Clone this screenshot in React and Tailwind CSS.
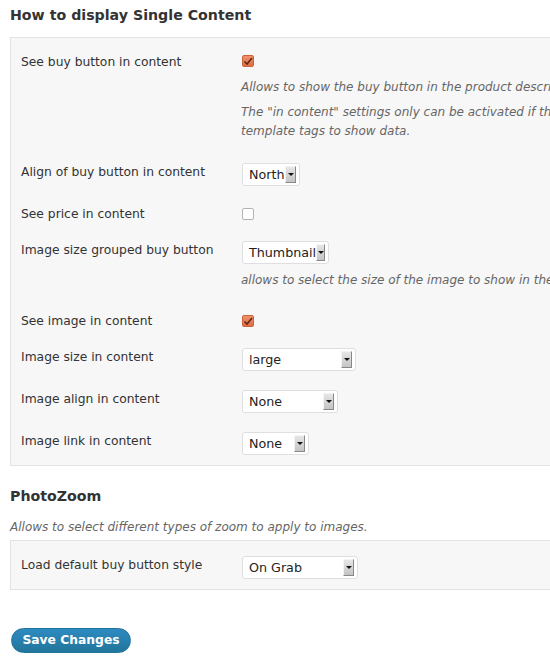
import React from 'react';

const font = { fontFamily: '"DejaVu Sans", Verdana, sans-serif' };

function Arrow() {
  return (
    <span className="ml-auto mr-[3px] flex h-[17px] w-[11px] items-center justify-center border-r border-b border-r-[#888] border-b-[#888] border-t border-l border-t-[#f4f4f4] border-l-[#f4f4f4] bg-gradient-to-b from-[#e6e6e6] to-[#c4c4c4]">
      <span className="h-0 w-0 border-x-[3px] border-t-[3px] border-x-transparent border-t-[#111]" />
    </span>
  );
}

function Select({ value, width }) {
  return (
    <div
      className="flex h-[23px] items-center rounded-[3px] border border-[#dfdfdf] bg-white pl-[6px] text-[12.7px] text-[#222]"
      style={{ width }}
    >
      <span>{value}</span>
      <Arrow />
    </div>
  );
}

function Checkbox({ checked }) {
  if (!checked) {
    return <span className="block h-[12px] w-[12px] rounded-[2px] border border-[#b4b4b4] bg-white" />;
  }
  return (
    <span className="flex h-[12px] w-[12px] items-center justify-center rounded-[2px] border border-[#c9633d] bg-gradient-to-b from-[#f0906a] to-[#e06c43]">
      <svg width="10" height="9" viewBox="0 0 10 9">
        <path d="M1.5 4.5 L4 7 L9 1" fill="none" stroke="#5a2a18" strokeWidth="1.6" />
      </svg>
    </span>
  );
}

function Label({ children }) {
  return <div className="w-[221px] shrink-0 pt-[9px] text-[12.3px] leading-[18px] text-[#333]">{children}</div>;
}

function Row({ label, kind, children }) {
  const h = kind === 'check' ? 'min-h-[36px]' : 'min-h-[42px]';
  return (
    <div className={`flex ${h}`}>
      <Label>{label}</Label>
      <div className={kind === 'check' ? 'pt-[12px]' : 'pt-[9px]'}>{children}</div>
    </div>
  );
}

function Desc({ children, className = '' }) {
  return <p className={`whitespace-nowrap text-[12px] italic leading-[19px] text-[#666] ${className}`}>{children}</p>;
}

export default function App() {
  return (
    <div className="h-[659px] w-[550px] overflow-hidden bg-white" style={font}>
      <div className="pl-[10px] pt-[5px]">
        <h3 className="text-[14.2px] font-bold leading-[20px] text-[#333]">How to display Single Content</h3>

        <div className="mt-[12px] w-[600px] border border-[#e3e3e3] bg-[#f7f7f7] pl-[10px] pt-[6px]">
          <div className="flex h-[110px]">
            <Label>See buy button in content</Label>
            <div className="pt-[11px]">
              <Checkbox checked />
              <Desc className="mt-[11px] -ml-[1px]">Allows to show the buy button in the product description.</Desc>
              <Desc className="mt-[6px] -ml-[1px]">The "in content" settings only can be activated if the theme doesn't use</Desc>
              <Desc className="-ml-[1px]">template tags to show data.</Desc>
            </div>
          </div>

          <Row label="Align of buy button in content">
            <Select value="North" width="58px" />
          </Row>
          <Row label="See price in content" kind="check">
            <Checkbox />
          </Row>
          <div className="flex h-[71px]">
            <Label>Image size grouped buy button</Label>
            <div className="pt-[9px]">
              <Select value="Thumbnail" width="87px" />
              <Desc className="mt-[7px] -ml-[1px]">allows to select the size of the image to show in the grouped buy button</Desc>
            </div>
          </div>
          <Row label="See image in content" kind="check">
            <Checkbox checked />
          </Row>
          <Row label="Image size in content">
            <Select value="large" width="114px" />
          </Row>
          <Row label="Image align in content">
            <Select value="None" width="96px" />
          </Row>
          <Row label="Image link in content">
            <Select value="None" width="67px" />
          </Row>
        </div>

        <h3 className="mt-[20px] text-[14.2px] font-bold leading-[20px] text-[#333]">PhotoZoom</h3>
        <Desc className="mt-[12px]">Allows to select different types of zoom to apply to images.</Desc>
        <div className="mt-[3px] w-[600px] border border-[#e3e3e3] bg-[#f7f7f7] pl-[10px] pt-[6px]">
          <Row label="Load default buy button style">
            <Select value="On Grab" width="116px" />
          </Row>
        </div>

        <button className="mt-[38px] ml-[1px] h-[25px] w-[120px] rounded-full border border-[#21759b] bg-gradient-to-b from-[#2e8bc0] to-[#21759b] text-[12.3px] font-bold text-white">
          Save Changes
        </button>
      </div>
    </div>
  );
}
